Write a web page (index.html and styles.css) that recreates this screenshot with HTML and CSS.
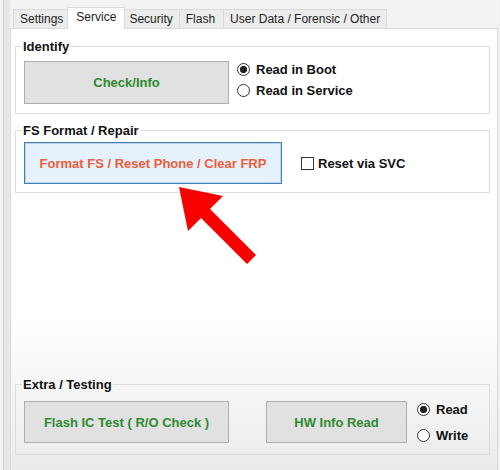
FILE: index.html
```html
<!DOCTYPE html>
<html>
<head>
<meta charset="utf-8">
<link rel="stylesheet" href="styles.css">
</head>
<body>
<div class="window">
  <div class="side"></div>
  <div class="main">
    <div class="tabs">
      <div class="tab">Settings</div>
      <div class="tab active">Service</div>
      <div class="tab">Security</div>
      <div class="tab tab-flash">Flash</div>
      <div class="tab">User Data / Forensic / Other</div>
    </div>
    <div class="panel">
      <fieldset class="group g-identify">
        <legend>Identify</legend>
        <div class="row">
          <button class="btn btn-gray w-wide">Check/Info</button>
          <div class="radios">
            <label class="radio"><span class="circle checked"></span>Read in Boot</label>
            <label class="radio"><span class="circle"></span>Read in Service</label>
          </div>
        </div>
      </fieldset>
      <fieldset class="group g-fs">
        <legend>FS Format / Repair</legend>
        <div class="row">
          <button class="btn btn-blue">Format FS / Reset Phone / Clear FRP</button>
          <label class="check"><span class="box"></span>Reset via SVC</label>
        </div>
      </fieldset>
      <fieldset class="group g-extra">
        <legend>Extra / Testing</legend>
        <div class="row">
          <button class="btn btn-gray w-wide">Flash IC Test ( R/O Check )</button>
          <button class="btn btn-gray w-hw">HW Info Read</button>
          <div class="radios radios-tall">
            <label class="radio"><span class="circle checked"></span>Read</label>
            <label class="radio"><span class="circle"></span>Write</label>
          </div>
        </div>
      </fieldset>
    </div>
  </div>
  <svg class="arrow" width="500" height="470" viewBox="0 0 500 470">
    <polygon points="179,187 223,196 210,209 256,255 247,264 201,218 188,231" fill="#f70000"/>
  </svg>
</div>
</body>
</html>
```

FILE: styles.css
```css
body {
  margin: 0;
  background: #f0f0f0;
  font-family: "Liberation Sans", Arial, sans-serif;
}

.window {
  position: relative;
  display: flex;
  width: 500px;
  height: 470px;
  overflow: hidden;
  background: #f0f0f0;
}

.side {
  flex: none;
  width: 10px;
  background: linear-gradient(to right, #f4f4f4 0, #f4f4f4 3px, #cdcdcd 3px, #cdcdcd 4px, #e8e8e8 4px, #e8e8e8 10px);
}

.main {
  flex: none;
  width: 488px;
  display: flex;
  flex-direction: column;
}

.tabs {
  flex: none;
  height: 28px;
  display: flex;
  align-items: flex-end;
  padding-left: 4px;
  background: #f3f3f3;
}

.tab {
  box-sizing: border-box;
  height: 19px;
  padding: 0 6px;
  margin-left: -1px;
  border: 1px solid #d9d9d9;
  border-bottom: none;
  background: #ececec;
  font-size: 12px;
  line-height: 18px;
  color: #222;
  white-space: nowrap;
}

.tab-flash {
  padding: 0 8px 0 6px;
}

.tab.active {
  position: relative;
  z-index: 1;
  height: 22px;
  margin: 0 -2px -1px -3px;
  padding: 0 8px;
  background: #fff;
  line-height: 19px;
}

.panel {
  flex: 1;
  display: flex;
  flex-direction: column;
  border: 1px solid #d9d9d9;
  border-bottom: none;
  background: linear-gradient(to bottom, #ffffff 0, #ffffff 290px, #ebebeb 100%);
}

.group {
  margin: 0 7px 0 4px;
  padding: 5px 8px 8px 8px;
  border: 1px solid #dcdcdc;
  min-inline-size: 0;
}

.group legend {
  margin-left: -2px;
  padding: 0 1px;
  font-size: 13px;
  font-weight: bold;
  line-height: 15px;
  color: #111;
}

.g-identify {
  margin-top: 10px;
}

.g-fs {
  margin-top: 9px;
  padding-top: 4px;
}

.g-extra {
  margin-top: auto;
  margin-bottom: 15px;
  padding-top: 4px;
  padding-bottom: 6px;
}

.row {
  display: flex;
  align-items: center;
}

.btn {
  box-sizing: border-box;
  height: 42px;
  margin: 0;
  padding: 0;
  border: 1px solid #adadad;
  font-family: "Liberation Sans", Arial, sans-serif;
  font-size: 13px;
  font-weight: bold;
}

.btn-gray {
  background: #e1e1e1;
  color: #2e8a30;
}

.g-identify .btn {
  height: 43px;
}

.w-wide {
  width: 205px;
}

.w-hw {
  width: 141px;
  margin-left: 37px;
}

.btn-blue {
  width: 258px;
  background: #e5f1fb;
  border-color: #3f80b8;
  box-shadow: inset 0 0 0 1px rgba(63, 128, 184, 0.25);
  color: #ee5c3b;
}

.radios {
  display: flex;
  flex-direction: column;
  margin-left: 8px;
  margin-bottom: 4px;
}

.radios-tall {
  margin-left: 10px;
  margin-bottom: 0;
}

.radio {
  display: flex;
  align-items: center;
  height: 21px;
  font-size: 13px;
  font-weight: bold;
  color: #111;
}

.radios-tall .radio {
  height: 26px;
}

.circle {
  box-sizing: border-box;
  width: 13px;
  height: 13px;
  margin-right: 6px;
  border: 1px solid #333;
  border-radius: 50%;
  background: #fff;
}

.circle.checked {
  background: radial-gradient(circle, #222 0, #222 3.3px, #fff 4px);
}

.check {
  display: flex;
  align-items: center;
  margin-left: 19px;
  font-size: 13px;
  font-weight: bold;
  color: #111;
}

.box {
  box-sizing: border-box;
  width: 13px;
  height: 13px;
  margin-right: 4px;
  border: 1px solid #333;
  background: #fff;
}

.arrow {
  position: absolute;
  left: 0;
  top: 0;
  pointer-events: none;
}
```
